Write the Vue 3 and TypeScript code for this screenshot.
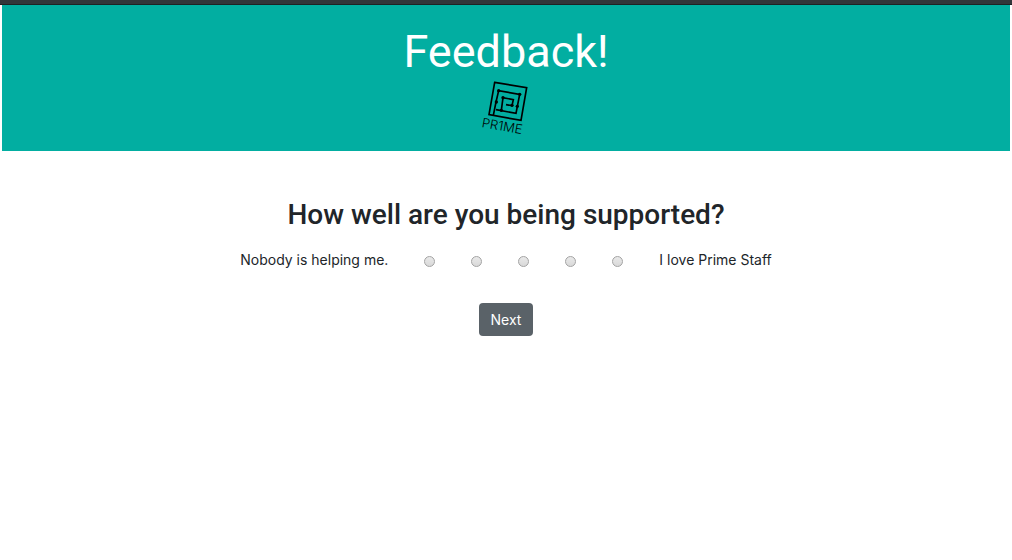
<script setup lang="ts">
import { ref } from 'vue'

const scores: number[] = [1, 2, 3, 4, 5]
const support = ref<number | null>(null)
</script>

<template>
  <div class="page">
    <div class="strip"></div>
    <header class="banner">
      <h1>Feedback!</h1>
      <svg class="logo" viewBox="30 18 156 168" role="img" aria-label="Prime">
        <g fill="none" stroke="#000" stroke-width="5">
          <path d="M74 25 L170 41 L153 139 L57 122 Z" />
          <path d="M70 124 L78 84 L86 50 L149 61 L138 118 L78 107" />
          <path d="M94 109 L99 71 L130 77 L126 95 L108 92" />
        </g>
        <g fill="#000">
          <circle cx="86" cy="50" r="5" />
          <circle cx="149" cy="61" r="5" />
          <circle cx="99" cy="71" r="5" />
          <circle cx="79" cy="84" r="5" />
          <circle cx="94" cy="109" r="5" />
          <circle cx="126" cy="94" r="5" />
          <circle cx="142" cy="97" r="5" />
        </g>
        <text x="34" y="159" transform="rotate(10 34 159)">PR1ME</text>
      </svg>
    </header>
    <main>
      <form @submit.prevent>
        <h2 id="question">How well are you being supported?</h2>
        <div class="scale" role="radiogroup" aria-labelledby="question">
          <span>Nobody is helping me.</span>
          <div class="choices">
            <label v-for="score in scores" :key="score" class="choice">
              <input v-model="support" type="radio" name="support" :value="score" :aria-label="`${score} of 5`" />
            </label>
          </div>
          <span>I love Prime Staff</span>
        </div>
        <button type="submit">Next</button>
      </form>
    </main>
  </div>
</template>

<style>
body {
  margin: 0;
  background: #fff;
}
</style>

<style scoped>
.page {
  color: #212529;
  font-family: Inter, "Liberation Sans", sans-serif;
  font-size: 14px;
  line-height: 20px;
}
.strip {
  box-sizing: border-box;
  height: 5px;
  background: #32363a;
  border-bottom: 1px solid #1f2224;
}
.banner {
  display: flex;
  flex-direction: column;
  align-items: center;
  margin: 0 2px;
  padding: 20px 0 15px;
  background: #02aea1;
}
h1,
h2 {
  margin: 0;
  font-family: Roboto, "Liberation Sans", sans-serif;
}
h1 {
  color: #fff;
  font-size: 45px;
  font-weight: 400;
  line-height: 54px;
}
.logo {
  display: block;
  width: 52px;
  height: 56px;
  margin-top: 1px;
}
.logo text {
  fill: #000;
  font-family: Inter, "Liberation Sans", sans-serif;
  font-size: 39px;
  font-weight: 300;
}
form {
  display: flex;
  flex-direction: column;
  align-items: center;
  padding: 46px 16px;
}
h2 {
  font-size: 28px;
  font-weight: 500;
  line-height: 36px;
}
.scale {
  display: flex;
  align-items: center;
  gap: 36px;
  margin: 17px 0 33px;
}
.choices {
  display: flex;
  gap: 36px;
}
.choice {
  display: flex;
}
input {
  appearance: none;
  box-sizing: border-box;
  width: 11px;
  height: 11px;
  margin: 2px 0 0;
  border: 1px solid #a3a3a3;
  border-radius: 50%;
  background: linear-gradient(#e9e9e9, #d9d9d9);
}
input:checked {
  background: radial-gradient(#444 35%, #ddd 40%);
}
button {
  padding: 6px 12px;
  border: 0;
  border-radius: 4px;
  background: #5a6268;
  color: #fff;
  font: inherit;
  line-height: 21px;
}
</style>
